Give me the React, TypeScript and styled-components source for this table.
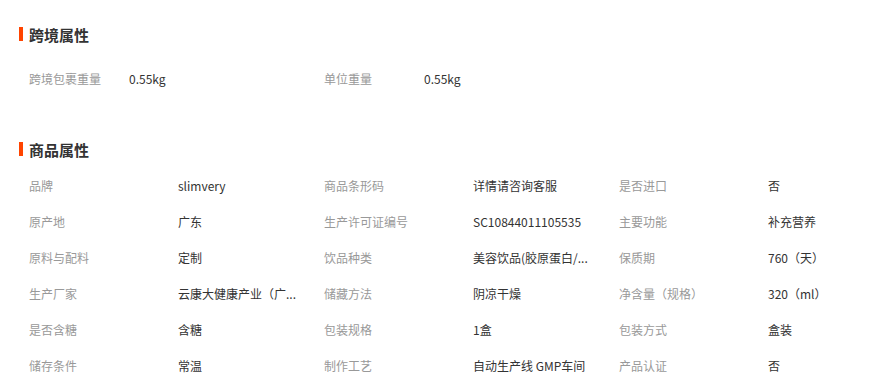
import React from "react";
import styled, { createGlobalStyle } from "styled-components";

interface IAttr {
  label: string;
  value: string;
}

const crossBorder: IAttr[] = [
  { label: "跨境包裹重量", value: "0.55kg" },
  { label: "单位重量", value: "0.55kg" },
];

// long values are shortened the way the list shows them
const goods: IAttr[] = [
  { label: "品牌", value: "slimvery" },
  { label: "商品条形码", value: "详情请咨询客服" },
  { label: "是否进口", value: "否" },
  { label: "原产地", value: "广东" },
  { label: "生产许可证编号", value: "SC10844011105535" },
  { label: "主要功能", value: "补充营养" },
  { label: "原料与配料", value: "定制" },
  { label: "饮品种类", value: "美容饮品(胶原蛋白/..." },
  { label: "保质期", value: "760（天）" },
  { label: "生产厂家", value: "云康大健康产业（广..." },
  { label: "储藏方法", value: "阴凉干燥" },
  { label: "净含量（规格）", value: "320（ml）" },
  { label: "是否含糖", value: "含糖" },
  { label: "包装规格", value: "1盒" },
  { label: "包装方式", value: "盒装" },
  { label: "储存条件", value: "常温" },
  { label: "制作工艺", value: "自动生产线 GMP车间" },
  { label: "产品认证", value: "否" },
];

function App() {
  return (
    <>
      <GlobalStyle />
      <Page>
        <Section>
          <Title>跨境属性</Title>
          <Grid $top={16}>
            {crossBorder.map((a) => (
              <Cell key={a.label}>
                <Label $width={100}>{a.label}</Label>
                <Value>{a.value}</Value>
              </Cell>
            ))}
          </Grid>
        </Section>
        <Section $top={43}>
          <Title>商品属性</Title>
          <Grid $top={8}>
            {goods.map((a) => (
              <Cell key={a.label}>
                <Label $width={149}>{a.label}</Label>
                <Value>{a.value}</Value>
              </Cell>
            ))}
          </Grid>
        </Section>
      </Page>
    </>
  );
}

const GlobalStyle = createGlobalStyle`
  body {
    margin: 0;
    background: #fff;
    font-family: "Noto Sans CJK SC", "Liberation Sans", sans-serif;
  }
`;

const Page = styled.div`
  width: 869px;
  height: 388px;
  overflow: hidden;
  padding: 24px 0 0 19px;
  box-sizing: border-box;
`;

const Section = styled.section<{ $top?: number }>`
  margin-top: ${(p) => p.$top || 0}px;
`;

const Title = styled.h2`
  margin: 0;
  display: flex;
  align-items: center;
  height: 20px;
  font-size: 15px;
  font-weight: bold;
  color: #333;
  &::before {
    content: "";
    width: 4px;
    height: 14px;
    margin-right: 6px;
    background: #ff4400;
  }
`;

const Grid = styled.div<{ $top: number }>`
  margin-top: ${(p) => p.$top}px;
  padding-left: 10px;
  display: grid;
  grid-template-columns: repeat(3, 295px);
`;

const Cell = styled.div`
  display: flex;
  align-items: center;
  height: 36px;
  font-size: 12px;
`;

const Label = styled.span<{ $width: number }>`
  flex: 0 0 ${(p) => p.$width}px;
  color: #999;
  white-space: nowrap;
`;

const Value = styled.span`
  color: #333;
  white-space: nowrap;
`;

export default App;
